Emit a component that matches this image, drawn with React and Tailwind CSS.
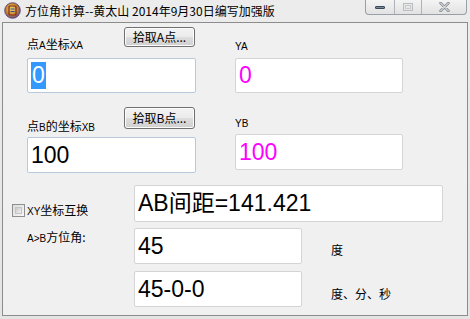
const SANS = "font-['Liberation_Sans','Noto_Sans_CJK_SC',sans-serif]";
const CJK = "font-['Noto_Sans_CJK_SC','Liberation_Sans',sans-serif]";

function Field({ className = '', color = 'text-black', children }) {
  return (
    <div className={`flex items-center rounded-[2px] border bg-white pl-[3px] text-[23px] leading-none ${color} ${SANS} ${className}`}>
      {children}
    </div>
  );
}

function WinButton({ children }) {
  return (
    <button className={`flex w-[71px] items-center justify-center rounded-[3px] border border-[#707070] bg-[linear-gradient(#f3f3f3_0%,#ebebeb_48%,#dddddd_52%,#cfcfcf_100%)] text-[12px] leading-none text-black shadow-[inset_0_0_0_1px_#fcfcfc] ${CJK}`}>
      {children}
    </button>
  );
}

function Small({ children }) {
  return <span className={`text-[10px] ${SANS}`}>{children}</span>;
}

function TitleIcon() {
  return (
    <svg width="17" height="17" viewBox="0 0 17 17">
      <defs>
        <radialGradient id="ic" cx="45%" cy="40%" r="60%">
          <stop offset="0%" stopColor="#f7d77a" />
          <stop offset="60%" stopColor="#c8862e" />
          <stop offset="100%" stopColor="#6a4a8c" />
        </radialGradient>
      </defs>
      <circle cx="8.5" cy="8.5" r="7.8" fill="url(#ic)" stroke="#4a3a6a" strokeWidth="0.8" />
      <rect x="5" y="4" width="7" height="9" rx="1" fill="none" stroke="#7a2a1a" strokeWidth="1.2" />
      <path d="M6.5 7h4M6.5 9.5h4" stroke="#2a4a9a" strokeWidth="1" />
    </svg>
  );
}

function Caption() {
  return (
    <div className="flex h-[15px] overflow-hidden rounded-b-[4px] border border-t-0 border-[#9aa0a8] bg-[linear-gradient(#f4f4f4,#e2e2e2)]">
      <div className="flex w-[29px] items-center justify-center border-r border-[#b0b4ba]">
        <div className="mt-[1px] h-[3px] w-[10px] rounded-[1px] border border-[#3a4a5a] bg-[#7c8a98]" />
      </div>
      <div className="flex w-[27px] items-center justify-center border-r border-[#b0b4ba]">
        <div className="h-[8px] w-[10px] border border-[#b8bcc2] bg-[#e8e8e8] p-[1px]">
          <div className="h-full w-full border border-[#c8cacd]" />
        </div>
      </div>
      <div className="flex w-[44px] items-center justify-center">
        <svg width="11" height="10" viewBox="0 0 11 10">
          <path d="M1.5 1l8 8M9.5 1l-8 8" stroke="#8a9098" strokeWidth="2.6" strokeLinecap="round" />
          <path d="M1.5 1l8 8M9.5 1l-8 8" stroke="#f4f4f4" strokeWidth="1" strokeLinecap="round" />
        </svg>
      </div>
    </div>
  );
}

export default function App() {
  return (
    <div className="flex h-[319px] w-[470px] flex-col bg-[linear-gradient(#ececec,#e4e4e4)] px-[2px] pb-[3px]">
      <div className="flex h-[22px] shrink-0 items-start">
        <div className="mt-[2px] ml-[2px]">
          <TitleIcon />
        </div>
        <div className={`ml-[4px] mt-[3px] text-[12px] leading-[16px] text-black ${CJK}`}>
          方位角计算--黄太山 2014年9月30日编写加强版
        </div>
        <div className="ml-auto mr-[1px]">
          <Caption />
        </div>
      </div>

      <div className={`flex flex-1 flex-col border border-[#8c8c8c] bg-[#f0f0f0] text-black ${CJK}`}>
        {/* A row */}
        <div className="mt-[4px] ml-[24px] flex gap-[39px]">
          <div className="w-[169px]">
            <div className="flex h-[31px] justify-between">
              <div className="mt-[10px] text-[12px] leading-[13px]">
                点<Small>A</Small>坐标<Small>XA</Small>
              </div>
              <div className="mr-[1px] flex h-[20px]">
                <WinButton>拾取A点...</WinButton>
              </div>
            </div>
            <Field className="h-[35px] border-[#b9c9da]">
              <span className="bg-[#3399ff] px-[1px] py-[2px] text-white">0</span>
            </Field>
          </div>
          <div className="w-[168px]">
            <div className="h-[31px] pt-[13px] text-[11px] leading-[11px]">
              <Small>YA</Small>
            </div>
            <Field className="h-[35px] border-[#d4d4d4]" color="text-[#ff00ff]">0</Field>
          </div>
        </div>

        {/* B row */}
        <div className="mt-[14px] ml-[24px] flex gap-[39px]">
          <div className="w-[169px]">
            <div className="flex h-[30px] justify-between">
              <div className="mt-[12px] text-[12px] leading-[13px]">
                点<Small>B</Small>的坐标<Small>XB</Small>
              </div>
              <div className="mr-[1px] flex h-[22px]">
                <WinButton>拾取B点...</WinButton>
              </div>
            </div>
            <Field className="h-[36px] border-[#b9c9da]">100</Field>
          </div>
          <div className="w-[168px]">
            <div className="h-[27px] pt-[10px] text-[11px] leading-[11px]">
              <Small>YB</Small>
            </div>
            <Field className="h-[36px] border-[#d4d4d4]" color="text-[#ff00ff]">100</Field>
          </div>
        </div>

        {/* result rows */}
        <div className="mt-[12px] flex">
          <div className="w-[131px] shrink-0">
            <div className="mt-[18px] ml-[9px] flex items-center gap-[2px]">
              <div className="h-[13px] w-[13px] border border-[#8e8f8f] bg-[linear-gradient(135deg,#dcdcdc,#f8f8f8)] p-[2px]">
                <div className="h-full w-full border border-[#c4c4c4] bg-[linear-gradient(135deg,#cbcbcb,#f0f0f0)]" />
              </div>
              <div className="text-[12px] leading-[13px]">
                <Small>XY</Small>坐标互换
              </div>
            </div>
            <div className="mt-[13px] ml-[24px] text-[12px] leading-[12px]">
              <Small>A&gt;B</Small>方位角:
            </div>
          </div>
          <div className="flex flex-col">
            <Field className="h-[37px] w-[309px] border-[#d4d4d4]">AB间距=141.421</Field>
            <div className="mt-[6px] flex items-center">
              <Field className="h-[36px] w-[168px] border-[#d4d4d4]">45</Field>
              <div className="ml-[29px] mt-[7px] text-[12px] leading-[12px]">度</div>
            </div>
            <div className="mt-[7px] flex items-center">
              <Field className="h-[36px] w-[168px] border-[#d4d4d4]">45-0-0</Field>
              <div className="ml-[29px] mt-[10px] text-[12px] leading-[12px]">度、分、秒</div>
            </div>
          </div>
        </div>
      </div>
    </div>
  );
}
